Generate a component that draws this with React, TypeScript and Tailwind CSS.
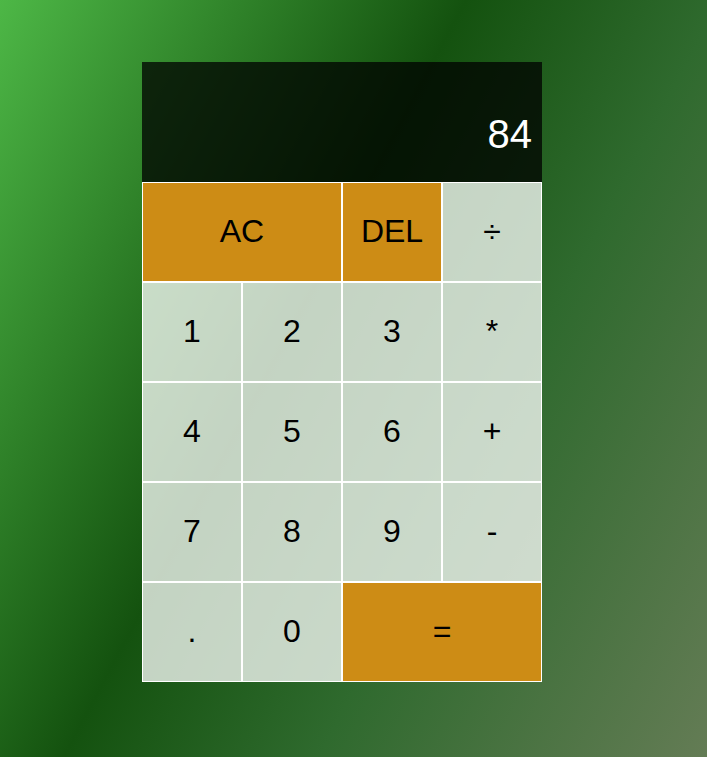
import { useState } from "react";

const btn =
  "border border-white bg-white/75 pb-[2px] text-[32px] leading-[normal] text-black cursor-pointer outline-none hover:bg-white/90";
const accent =
  "border border-white bg-[#cd8c15] pb-[2px] text-[32px] leading-[normal] text-black cursor-pointer outline-none hover:bg-[#d99a25]";

export default function App() {
  const [current] = useState("84");
  const [previous] = useState("");

  return (
    <div className="min-h-screen w-full bg-[linear-gradient(118deg,#4db746_0%,#14520f_42%,#2f6a2e_65%,#647c55_100%)] font-['Liberation_Sans',Arial,sans-serif]">
      <div className="pl-[142px] pt-[62px] pb-[75px]">
        <div className="grid grid-cols-[repeat(4,100px)] grid-rows-[minmax(120px,auto)_repeat(5,100px)]">
          {/* display */}
          <div className="col-span-4 bg-black/75 py-3 pl-3 pr-[10px] flex flex-col items-end justify-around break-all">
            <div className="text-white/75 text-2xl leading-[normal]">{previous}</div>
            <div className="text-white text-[40px] leading-[normal]">{current}</div>
          </div>

          <button className={`${accent} col-span-2`}>AC</button>
          <button className={accent}>DEL</button>
          <button className={btn}>÷</button>

          <button className={btn}>1</button>
          <button className={btn}>2</button>
          <button className={btn}>3</button>
          <button className={btn}>*</button>

          <button className={btn}>4</button>
          <button className={btn}>5</button>
          <button className={btn}>6</button>
          <button className={btn}>+</button>

          <button className={btn}>7</button>
          <button className={btn}>8</button>
          <button className={btn}>9</button>
          <button className={btn}>-</button>

          <button className={btn}>.</button>
          <button className={btn}>0</button>
          <button className={`${accent} col-span-2`}>=</button>
        </div>
      </div>
    </div>
  );
}
